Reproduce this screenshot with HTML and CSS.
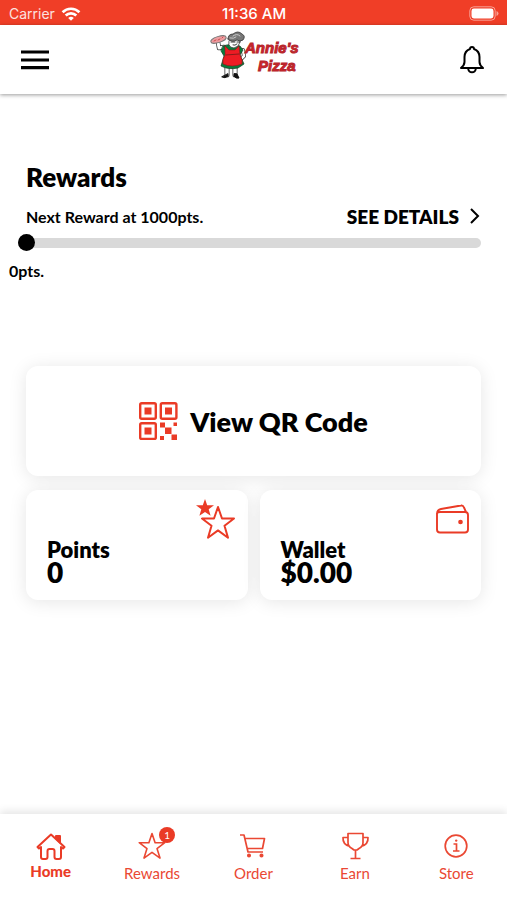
FILE: index.html
```html
<!DOCTYPE html>
<html lang="en">
<head>
<meta charset="utf-8">
<meta name="viewport" content="width=device-width, initial-scale=1">
<title>Annie's Pizza</title>
<link rel="stylesheet" href="styles.css">
</head>
<body>
<div class="status">
  <div class="carrier"><span>Carrier</span>
    <svg width="20" height="14" viewBox="0 0 20 14" fill="none" stroke="currentColor" stroke-width="2.7"><path d="M1.6 5.2a12 12 0 0 1 16.8 0M4.7 8.5a7.6 7.6 0 0 1 10.6 0"/><path d="M10 13.8 7.2 11a4 4 0 0 1 5.6 0z" fill="currentColor" stroke="none"/></svg>
  </div>
  <time>11:36 AM</time>
  <svg class="battery" width="30" height="16" viewBox="0 0 30 16"><rect x=".8" y=".8" width="25.4" height="13.4" rx="4" fill="none" stroke="#fff" stroke-opacity=".5"/><rect x="2.5" y="2.5" width="22" height="10" rx="2.4" fill="#fff"/><path d="M27.5 5v5q2-.8 2-2.500t-2-2.500" fill="#fff" opacity=".5"/></svg>
</div>
<header class="header">
  <button class="icon-button" aria-label="Menu"><svg width="28" height="20" viewBox="0 0 28 20" stroke="#000" stroke-width="3.2"><path d="M0 2h28M0 10h28M0 17.700h28"/></svg></button>
  <svg class="logo" width="90" height="50" viewBox="0 0 90 50" role="img" aria-label="Annie's Pizza">
    <g stroke-linejoin="round" stroke-linecap="round">
      <path d="M17 35v9M25 35v9" stroke="#333" stroke-width="5"/>
      <path d="M17 35v9M25 35v9" stroke="#fff" stroke-width="3.500"/>
      <path d="M18 43v2q-3 3-6 1zM24 43v2q2 3 5 2l-2-4z" fill="#111" stroke="#111"/>
      <path d="m14 16-5 1-1-6" fill="none" stroke="#333" stroke-width="4.500"/>
      <path d="m14 16-5 1-1-6" fill="none" stroke="#fff" stroke-width="3"/>
      <path d="m33 19 1 6-6 6" fill="none" stroke="#333" stroke-width="4"/>
      <path d="m33 19 1 6-6 6" fill="none" stroke="#fff" stroke-width="2.500"/>
      <path d="M13 15q8-3 17 0l3 4-3 5 4 9-6 4q-10 2-17-2l3-10-3-5z" fill="#087b3b" stroke="#123b22" stroke-width=".7"/>
      <path d="m15 15 4 4h6l4-4 1 9q3 5 2 9-10 4-19 0-1-5 2-9z" fill="#ed1c24" stroke="#8b1a1a" stroke-width=".6"/>
      <path d="m16 24 13-1" stroke="#8b1a1a" stroke-width="1"/>
      <path d="M19 10q1-5 7-5 5 1 4 6-1 5-6 6-4 0-5-3z" fill="#fff" stroke="#333" stroke-width=".8"/>
      <path d="M18 8q0-5 5-5 5-4 9 0 4 2 1 6-3 2-6 0-5 3-9-1z" fill="#777" stroke="#333" stroke-width=".8"/>
      <path d="M23 5q4-3 7 0M20 7q4 1 6-1" fill="none" stroke="#ccc"/>
      <path d="M21 11h4M27 11h3m-7 3q2 1 4-1" fill="none" stroke="#222" stroke-width=".9"/>
      <ellipse cx="8.500" cy="8.500" rx="8" ry="3" transform="rotate(-17 8.500 8.500)" fill="#ef9da0" stroke="#777"/>
      <path d="m4 10 2-1m2 0 2-1m2-1 1-1" stroke="#c94c50"/>
    </g>
    <g class="logo-text"><text x="35" y="22">Annie's</text><text x="48" y="40">Pizza</text></g>
  </svg>
  <button class="icon-button" aria-label="Notifications"><svg width="24" height="28" viewBox="0 0 24 28" fill="none" stroke="#000" stroke-width="2" stroke-linejoin="round"><path d="M10 3a2 2 0 0 1 4 0q5.500 2 5.500 8v5q0 3 3.500 6H1q3.500-3 3.500-6v-5q0-6 5.500-8zM8.200 22.500a3.800 3.800 0 0 0 7.600 0"/></svg></button>
</header>
<main>
  <section class="rewards">
    <h1>Rewards</h1>
    <div class="reward-row">
      <label for="progress">Next Reward at 1000pts.</label>
      <a href="#details">SEE DETAILS <svg width="12" height="18" viewBox="0 0 12 18" fill="none" stroke="#000" stroke-width="2"><path d="m2 2 7 7-7 7"/></svg></a>
    </div>
    <input id="progress" type="range" min="0" max="1000" value="0">
    <output for="progress">0pts.</output>
  </section>
  <section class="cards">
    <button class="card qr">
      <svg width="39" height="39" viewBox="0 0 39 39" fill="#ea3b26"><g fill="none" stroke="#ea3b26" stroke-width="2.400"><rect x="1.200" y="1.200" width="15.600" height="15.600" rx="1.500"/><rect x="21.800" y="1.200" width="15.600" height="15.600" rx="1.500"/><rect x="1.200" y="21.300" width="15.600" height="15.600" rx="1.500"/></g><path d="M5.500 5.500h7v7h-7zM26 5.500h7v7h-7zM5.500 25.500h7v7h-7zM21 20.500h5v5h-5zM34.500 20.500H38V24h-3.500zM26 25.500h6.500V32H26zM21 34h4v4h-4zM32.500 32.500H38V38h-5.500z"/></svg>
      <span>View QR Code</span>
    </button>
    <button class="card tile">
      <svg width="40" height="42" viewBox="0 0 40 42"><path d="m9-1 2.200 6.200H18l-5.300 4.100 1.900 6.400L9 11.900l-5.600 3.800 1.900-6.400L0 5.200h6.800z" fill="#ea3b26"/><path d="m22 7 4 11.500h12l-9.500 7.300 3.500 11.900-10-7.300-10 7.300 3.500-11.900L6 18.500h12z" fill="none" stroke="#ea3b26" stroke-width="2" stroke-linejoin="round"/></svg>
      <span class="name">Points</span><span class="value">0</span>
    </button>
    <button class="card tile">
      <svg width="33" height="42" viewBox="0 0 33 42" fill="none" stroke="#ea3b26" stroke-width="1.900" stroke-linejoin="round"><path d="M1 14q0-4 4-5l20-3.500q2-.5 3 2l2 4.500M1 13v16.500q0 3 3 3h25q3 0 3-3V15q0-3-3-3H4q-2.500 0-3 1"/><circle cx="24.500" cy="22" r="1.400" fill="#ea3b26"/></svg>
      <span class="name">Wallet</span><span class="value">$0.00</span>
    </button>
  </section>
</main>
<nav aria-label="Main">
  <a href="#home" class="active" aria-current="page"><svg width="30" height="30" viewBox="0 0 30 30" fill="none" stroke="currentColor" stroke-width="2" stroke-linejoin="round"><path d="M1.500 16 15 3.500 28.500 16l-1.500 1.500-2-1.500v10q0 2-2 2h-2.500q-2 0-2-2v-6q0-2-2-2h-3q-2 0-2 2v6q0 2-2 2H7q-2 0-2-2V16l-2 1.500z"/><path d="M20 5h4v6.500L20 7z" fill="currentColor"/></svg><span>Home</span></a>
  <a href="#rewards"><span class="badged"><svg width="30" height="30" viewBox="0 0 30 30" fill="none" stroke="currentColor" stroke-width="1.600" stroke-linejoin="round"><path d="m15 2.500 3.100 9.200h9.700l-7.800 5.900 3 9.500-8-5.700-8 5.700 3-9.500-7.800-5.900h9.700z"/></svg><span class="badge">1</span></span><span>Rewards</span></a>
  <a href="#order"><svg width="30" height="30" viewBox="0 0 30 30" fill="none" stroke="currentColor" stroke-width="1.700" stroke-linejoin="round"><path d="M2 4h4l4 17h15M7 7.500h19.500l-2 10H9"/><circle cx="11" cy="24.500" r="1.200" fill="currentColor"/><circle cx="23.500" cy="24.500" r="1.200" fill="currentColor"/></svg><span>Order</span></a>
  <a href="#earn"><svg width="30" height="30" viewBox="0 0 30 30" fill="none" stroke="currentColor" stroke-width="1.700" stroke-linejoin="round"><path d="M8 2.500h15v9q0 4-4 6l-2 1.500h-3l-2-1.500q-4-2-4-6zM8 6.500H3q-.5 7 7 9M23 6.500h5q.5 7-7 9M15.500 19v8M10.500 27.500h10"/></svg><span>Earn</span></a>
  <a href="#store"><svg width="30" height="30" viewBox="0 0 30 30" fill="none" stroke="currentColor" stroke-width="1.700"><circle cx="15" cy="15" r="10.800"/><path d="M12.500 13h3v7M12 20h6.500"/><circle cx="15.200" cy="9.600" r="1.200" fill="currentColor" stroke="none"/></svg><span>Store</span></a>
</nav>
</body>
</html>
```
FILE: styles.css
```css
* { box-sizing: border-box; }

body {
  margin: 0;
  min-height: 100vh;
  display: flex;
  flex-direction: column;
  background: #fff;
  color: #000;
  font-family: Lato, sans-serif;
}

button {
  border: 0;
  padding: 0;
  background: none;
  color: inherit;
  font: inherit;
}

a { color: inherit; text-decoration: none; }
svg { display: block; flex: none; overflow: visible; }

.status {
  display: grid;
  grid-template-columns: 1fr auto 1fr;
  align-items: center;
  height: 25px;
  padding: 2px 8px 0 9px;
  background: #f03e27;
  color: #fff;
  font-family: Inter, sans-serif;
  font-size: 14px;
}

.carrier { display: flex; align-items: center; gap: 6px; }
.carrier span { opacity: 0.85; }
.status time { font-size: 15px; font-weight: 500; }
.battery { justify-self: end; }

.header {
  display: flex;
  justify-content: space-between;
  align-items: center;
  height: 69px;
  padding: 0 23px 0 21px;
  box-shadow: 0 1px 4px rgba(0, 0, 0, 0.4);
}

.logo { margin-bottom: 8px; }

.logo-text {
  fill: #d9232b;
  stroke: #b3262b;
  stroke-width: 1px;
  font: italic bold 15px "Liberation Sans", sans-serif;
}

main { flex: 1; padding: 67px 26px 24px; }
.rewards { display: flex; flex-direction: column; }

h1 {
  margin: 0;
  font-size: 26px;
  font-weight: 800;
  line-height: 32px;
}

.reward-row {
  display: flex;
  justify-content: space-between;
  align-items: center;
  height: 24px;
  margin-top: 11px;
  font-size: 16px;
  font-weight: 700;
}

.reward-row a {
  display: flex;
  align-items: center;
  gap: 10px;
  font-size: 19px;
  font-weight: 800;
}

input[type="range"] {
  appearance: none;
  height: 18px;
  margin: 6px 0 0 -8px;
  background: none;
}

input[type="range"]::-webkit-slider-runnable-track {
  height: 10px;
  border-radius: 5px;
  background: #d9d9d9;
}

input[type="range"]::-webkit-slider-thumb {
  appearance: none;
  width: 17px;
  height: 17px;
  margin-top: -4px;
  border-radius: 50%;
  background: #000;
}

output {
  margin: 10px 0 0 -17px;
  font-size: 16px;
  font-weight: 700;
  line-height: 18px;
}

.cards {
  display: grid;
  grid-template-columns: 1fr 1fr;
  gap: 14px 12px;
  margin-top: 86px;
}

.card {
  height: 110px;
  border-radius: 12px;
  background: #fff;
  box-shadow: 0 2px 18px rgba(0, 0, 0, 0.1);
  font-weight: 800;
}

.qr {
  grid-column: 1 / -1;
  display: flex;
  align-items: center;
  justify-content: center;
  gap: 12px;
  font-size: 27px;
}

.tile {
  display: flex;
  flex-direction: column;
  align-items: flex-start;
  padding: 10px 12px 18px 21px;
}

.tile svg { align-self: flex-end; margin-bottom: -2px; }
.name { font-size: 22px; line-height: 20px; }
.value { font-size: 28px; line-height: 24px; }

nav {
  display: grid;
  grid-template-columns: repeat(5, 1fr);
  height: 86px;
  padding-top: 17px;
  background: #fff;
  color: #ea4833;
  box-shadow: 0 -3px 8px rgba(0, 0, 0, 0.1);
}

nav a {
  display: flex;
  flex-direction: column;
  align-items: center;
  gap: 2px;
  font-size: 15px;
  line-height: 20px;
}

nav .active { gap: 0; color: #ea3b26; font-weight: 900; }
.badged { position: relative; }

.badge {
  position: absolute;
  top: -4px;
  right: -8px;
  width: 16px;
  height: 16px;
  border-radius: 50%;
  background: #ea3b26;
  color: #fff;
  font-size: 10px;
  line-height: 16px;
  text-align: center;
}
```
